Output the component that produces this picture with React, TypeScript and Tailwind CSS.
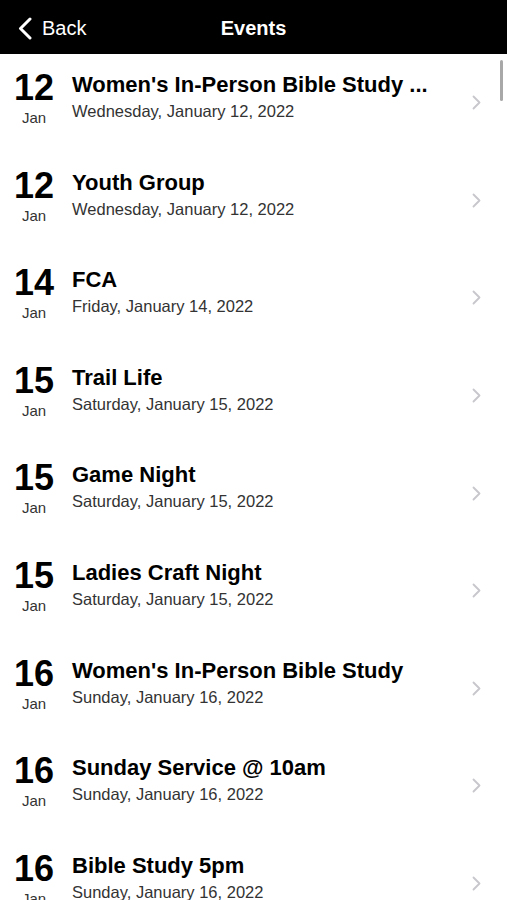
import React from "react";

const events = [
  { d: "12", m: "Jan", t: "Women's In-Person Bible Study ...", s: "Wednesday, January 12, 2022" },
  { d: "12", m: "Jan", t: "Youth Group", s: "Wednesday, January 12, 2022" },
  { d: "14", m: "Jan", t: "FCA", s: "Friday, January 14, 2022" },
  { d: "15", m: "Jan", t: "Trail Life", s: "Saturday, January 15, 2022" },
  { d: "15", m: "Jan", t: "Game Night", s: "Saturday, January 15, 2022" },
  { d: "15", m: "Jan", t: "Ladies Craft Night", s: "Saturday, January 15, 2022" },
  { d: "16", m: "Jan", t: "Women's In-Person Bible Study", s: "Sunday, January 16, 2022" },
  { d: "16", m: "Jan", t: "Sunday Service @ 10am", s: "Sunday, January 16, 2022" },
  { d: "16", m: "Jan", t: "Bible Study 5pm", s: "Sunday, January 16, 2022" },
];

export default function App() {
  return (
    <div
      className="relative w-[507px] h-[900px] overflow-hidden bg-white"
      style={{ fontFamily: "'Liberation Sans', Arial, sans-serif" }}
    >
      <div className="relative flex h-[54px] items-center bg-black pt-[2px] text-white">
        <div className="flex items-center pl-[17px]">
          <svg width="16" height="23" viewBox="0 0 16 23" fill="none">
            <path d="M13 2 L3.5 11.5 L13 21" stroke="white" strokeWidth="3" strokeLinecap="round" strokeLinejoin="round" />
          </svg>
          <span className="ml-[9px] text-[20px] leading-none">Back</span>
        </div>
        <div className="absolute left-0 right-0 top-0 flex h-[54px] items-center justify-center pt-[2px] pointer-events-none">
          <span className="text-[20px] font-bold leading-none">Events</span>
        </div>
      </div>
      <div className="flex flex-col">
        {events.map((e, i) => (
          <div key={i} className="flex h-[97.6px] shrink-0">
            <div className="flex w-[68px] shrink-0 flex-col items-center pt-[16px]">
              <span className="text-[36px] font-bold leading-none text-black">{e.d}</span>
              <span className="mt-[4px] text-[15px] leading-none text-[#333]">{e.m}</span>
            </div>
            <div className="flex min-w-0 flex-1 flex-col pl-[4px] pt-[20px]">
              <span className="whitespace-nowrap text-[22px] font-bold leading-none text-black">{e.t}</span>
              <span className="mt-[7px] whitespace-nowrap text-[16.5px] leading-none text-[#333]">{e.s}</span>
            </div>
            <div className="flex w-[40px] shrink-0 items-center justify-start pl-[5px]">
              <svg width="9" height="15" viewBox="0 0 9 15" fill="none">
                <path d="M1.5 1.5 L7.5 7.5 L1.5 13.5" stroke="#c7c7cc" strokeWidth="1.8" strokeLinecap="round" strokeLinejoin="round" />
              </svg>
            </div>
          </div>
        ))}
      </div>
      <div className="absolute right-[4px] top-[60px] h-[41px] w-[3px] rounded-full bg-[#a8a8a8]" />
    </div>
  );
}
